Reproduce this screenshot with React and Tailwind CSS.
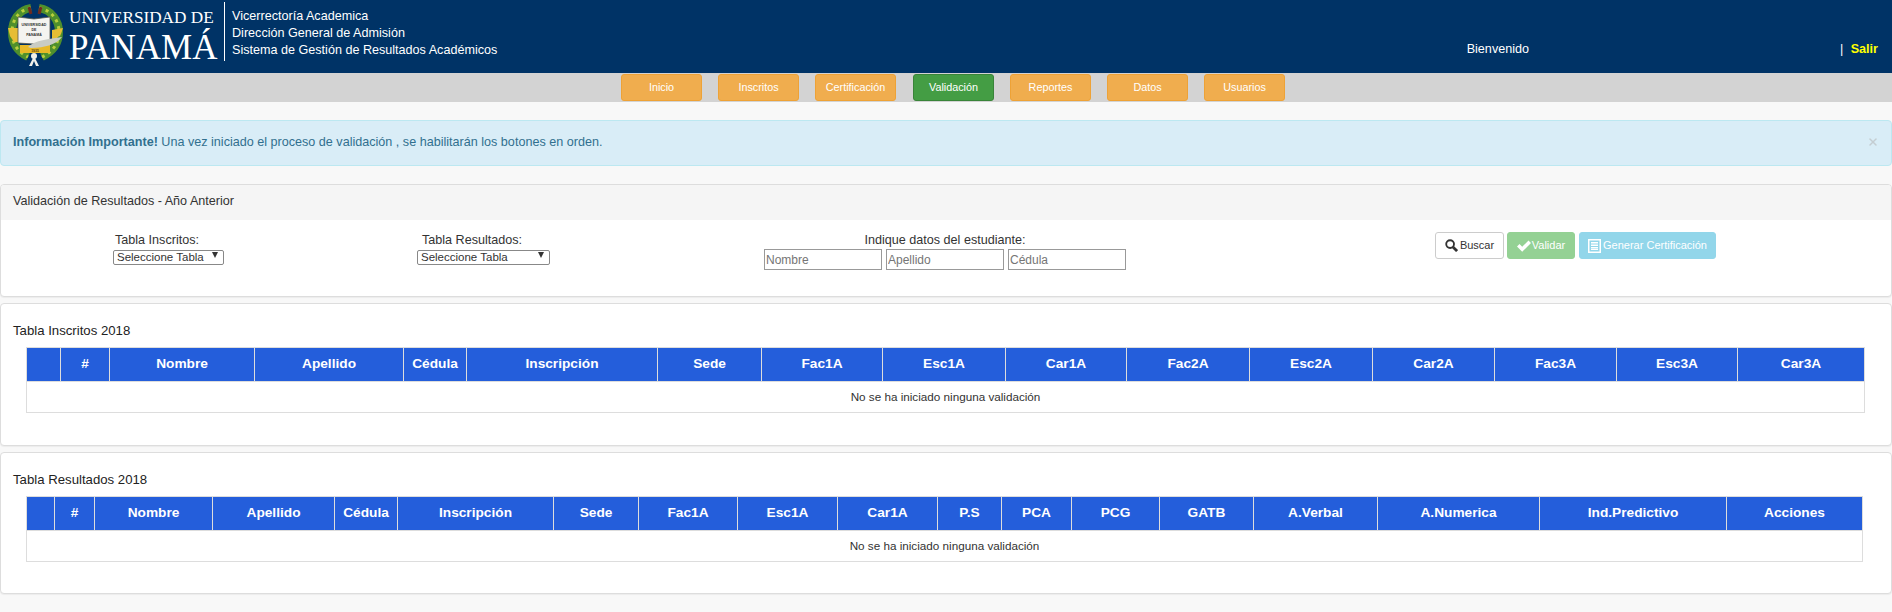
import React from 'react';
import { X } from 'lucide-react';

const navItems = ['Inicio', 'Inscritos', 'Certificación', 'Validación', 'Reportes', 'Datos', 'Usuarios'];

const inscritosCols = [
    { label: '', w: 'w-[34px]' },
    { label: '#', w: 'w-[49px]' },
    { label: 'Nombre', w: 'w-[145px]' },
    { label: 'Apellido', w: 'w-[149px]' },
    { label: 'Cédula', w: 'w-[63px]' },
    { label: 'Inscripción', w: 'w-[191px]' },
    { label: 'Sede', w: 'w-[104px]' },
    { label: 'Fac1A', w: 'w-[121px]' },
    { label: 'Esc1A', w: 'w-[123px]' },
    { label: 'Car1A', w: 'w-[121px]' },
    { label: 'Fac2A', w: 'w-[123px]' },
    { label: 'Esc2A', w: 'w-[123px]' },
    { label: 'Car2A', w: 'w-[122px]' },
    { label: 'Fac3A', w: 'w-[122px]' },
    { label: 'Esc3A', w: 'w-[121px]' },
    { label: 'Car3A', w: 'w-[127px]' },
];

const resultadosCols = [
    { label: '', w: 'w-[28px]' },
    { label: '#', w: 'w-[40px]' },
    { label: 'Nombre', w: 'w-[118px]' },
    { label: 'Apellido', w: 'w-[122px]' },
    { label: 'Cédula', w: 'w-[63px]' },
    { label: 'Inscripción', w: 'w-[156px]' },
    { label: 'Sede', w: 'w-[85px]' },
    { label: 'Fac1A', w: 'w-[99px]' },
    { label: 'Esc1A', w: 'w-[100px]' },
    { label: 'Car1A', w: 'w-[100px]' },
    { label: 'P.S', w: 'w-[64px]' },
    { label: 'PCA', w: 'w-[70px]' },
    { label: 'PCG', w: 'w-[88px]' },
    { label: 'GATB', w: 'w-[94px]' },
    { label: 'A.Verbal', w: 'w-[124px]' },
    { label: 'A.Numerica', w: 'w-[162px]' },
    { label: 'Ind.Predictivo', w: 'w-[187px]' },
    { label: 'Acciones', w: 'w-[136px]' },
];

const Crest = () => (
    <svg viewBox="0 0 64 68" className="w-[64px] h-[68px] shrink-0">
        {/* wreath */}
        <path d="M26 8 C13 10 7 21 7 32 C7 44 13 52 23 57" stroke="#4f8f2c" strokeWidth="8" fill="none" />
        <path d="M34 8 C47 10 54 21 54 32 C54 44 47 52 37 57" stroke="#4f8f2c" strokeWidth="8" fill="none" />
        <path d="M26 8 C13 10 7 21 7 32 C7 44 13 52 23 57" stroke="#b9cf3e" strokeWidth="3" strokeDasharray="3 4" fill="none" />
        <path d="M34 8 C47 10 54 21 54 32 C54 44 47 52 37 57" stroke="#b9cf3e" strokeWidth="3" strokeDasharray="3 4" fill="none" />
        <path d="M24 7 L26 14 M36 7 L34 14" stroke="#6e2a20" strokeWidth="3" />
        {/* gold side pieces */}
        <path d="M3 28 L13 28 L14 42 L9 42 L5 36 Z" fill="#e6bd35" />
        <path d="M58 28 L47 30 L47 40 L52 38 L56 34 Z" fill="#e6bd35" />
        {/* open book */}
        <path d="M13 17 L29 19 L45 17 L45 41 L29 44 L13 43 Z" fill="#f4f4f0" stroke="#55554a" strokeWidth="0.8" />
        <text x="29" y="26" textAnchor="middle" fontSize="3.6" fontWeight="700" fontFamily="Liberation Sans" fill="#333333">UNIVERSIDAD</text>
        <text x="29" y="31" textAnchor="middle" fontSize="3.6" fontWeight="700" fontFamily="Liberation Sans" fill="#333333">DE</text>
        <text x="29" y="36" textAnchor="middle" fontSize="3.6" fontWeight="700" fontFamily="Liberation Sans" fill="#333333">PANAMÁ</text>
        {/* ribbon */}
        <path d="M15 45 L45 45 L45 53 L15 53 Z" fill="#e8b928" />
        <text x="30" y="51.5" textAnchor="middle" fontSize="3.4" fontWeight="700" fontFamily="Liberation Sans" fill="#5a4212">1935</text>
        {/* feather */}
        <path d="M23 47 C30 40 44 39 57 37 C52 44 40 48 26 48 Z" fill="#c9ccc4" />
        {/* bow */}
        <path d="M29 56 L24 66 L27 66 L29 61 L31 66 L34 66 Z" fill="#f0f0ea" />
        <circle cx="29" cy="56" r="3" fill="#f0f0ea" />
    </svg>
);

const DataTable = ({ cols }) => (
    <table className="table-fixed border-collapse w-[1837px] ml-[25px] mt-[8px]">
        <thead>
            <tr className="h-[34px] bg-[#245edb]">
                {cols.map((c, i) => (
                    <th key={i} className={`${c.w} border border-[#dddddd] text-white text-[13.7px] font-bold text-center p-0`}>
                        {c.label}
                    </th>
                ))}
            </tr>
        </thead>
        <tbody>
            <tr className="h-[31px] bg-white">
                <td colSpan={cols.length} className="border border-[#dddddd] text-center text-[11.7px] text-[#333333] p-0">
                    No se ha iniciado ninguna validación
                </td>
            </tr>
        </tbody>
    </table>
);

const Panel = ({ className, children }) => (
    <div className={`bg-white border border-[#dddddd] rounded-[4px] shadow-[0_1px_1px_rgba(0,0,0,0.05)] ${className}`}>
        {children}
    </div>
);

const TableSelect = ({ className }) => (
    <div className={`relative h-[15px] ${className}`}>
        <select className="appearance-none w-full h-full bg-white border border-[#888888] rounded-[2px] text-[11.5px] leading-[13px] pl-[3px]">
            <option>Seleccione Tabla</option>
        </select>
        <svg viewBox="0 0 6 6" className="absolute right-[6px] top-[4px] w-[6px] h-[6px] pointer-events-none">
            <path d="M0 0H6L3 6Z" fill="#333333" />
        </svg>
    </div>
);

const App = () => {
    return (
        <div className="min-h-[612px] bg-[#f8f8f8] font-['Liberation_Sans',Arial,sans-serif] text-[#333333] overflow-hidden">
            {/* Header */}
            <div className="h-[73px] bg-[#003366] flex text-white">
                <div className="pl-[5px]"><Crest /></div>
                <div className="flex flex-col w-[155px] font-['Liberation_Serif',serif] whitespace-nowrap">
                    <span className="text-[17.2px] leading-[20px] mt-[8px]">UNIVERSIDAD DE</span>
                    <span className="text-[35px] leading-[36px] mt-[2px]">PANAMÁ</span>
                </div>
                <div className="w-px h-[59px] bg-white mt-[2px]"></div>
                <div className="ml-[7px] mt-[8px] text-[12.6px] leading-[17px]">
                    <p>Vicerrectoría Academica</p>
                    <p>Dirección General de Admisión</p>
                    <p>Sistema de Gestión de Resultados Académicos</p>
                </div>
                <span className="ml-auto mt-[41px] text-[12.6px] leading-[17px]">Bienvenido</span>
                <div className="ml-[311px] mr-[14px] mt-[41px] text-[12.6px] leading-[17px] w-[38px] flex justify-between">
                    <span>|</span>
                    <span className="font-bold text-[#ffff00]">Salir</span>
                </div>
            </div>

            {/* Nav */}
            <div className="h-[29px] bg-[#d3d3d3] flex justify-center gap-[16px] pt-px pl-[14px]">
                {navItems.map(item => (
                    <button
                        key={item}
                        className={`w-[81px] h-[27px] rounded-[3px] border text-white text-[10.8px] ${
                            item === 'Validación' ? 'ml-px bg-[#449d44] border-[#398439]' : 'bg-[#f0ad4e] border-[#eea236]'
                        }`}
                    >
                        {item}
                    </button>
                ))}
            </div>

            {/* Alert */}
            <div className="mt-[18px] h-[46px] bg-[#d9edf7] border border-[#bce8f1] rounded-[4px] flex items-center justify-between pl-[12px] pr-[12px] pb-[2px] text-[12.6px] text-[#31708f]">
                <p><b>Información Importante!</b> Una vez iniciado el proceso de validación , se habilitarán los botones en orden.</p>
                <X size={12} strokeWidth={3} className="text-[#c4cdd2]" />
            </div>

            {/* Filtros */}
            <Panel className="mt-[18px] h-[113px] overflow-hidden">
                <div className="h-[35px] bg-[#f5f5f5] flex items-center pl-[12px] pb-[2px] text-[12.6px]">
                    Validación de Resultados - Año Anterior
                </div>
                <div className="flex pt-[12px] text-[12.6px]">
                    <div className="w-[336px] pl-[112px] flex flex-col items-start">
                        <label className="ml-[2px] leading-[16px]">Tabla Inscritos:</label>
                        <TableSelect className="w-[111px]" />
                    </div>
                    <div className="w-[292px] pl-[80px] flex flex-col items-start">
                        <label className="ml-[5px] leading-[16px]">Tabla Resultados:</label>
                        <TableSelect className="w-[133px]" />
                    </div>
                    <div className="w-[632px] flex flex-col items-center">
                        <label className="leading-[16px]">Indique datos del estudiante:</label>
                        <div className="flex gap-[4px] mt-px">
                            <input placeholder="Nombre" className="w-[118px] h-[21px] bg-white border border-[#999999] text-[12px] pl-px placeholder:text-[#757575]" />
                            <input placeholder="Apellido" className="w-[118px] h-[21px] bg-white border border-[#999999] text-[12px] pl-px placeholder:text-[#757575]" />
                            <input placeholder="Cédula" className="w-[118px] h-[21px] bg-white border border-[#999999] text-[12px] pl-px placeholder:text-[#757575]" />
                        </div>
                    </div>
                    <div className="flex gap-[3px] ml-[174px] text-[11px] h-[27px]">
                        <button className="w-[69px] rounded-[3px] bg-white border border-[#cccccc] text-[#333333] flex items-center justify-center gap-[2px]">
                            <svg viewBox="0 0 14 14" className="w-[13px] h-[13px]" fill="none" stroke="currentColor">
                                <circle cx="5.5" cy="5.5" r="4.2" strokeWidth="2" />
                                <path d="M8.8 8.8L13 13" strokeWidth="3" />
                            </svg>
                            Buscar
                        </button>
                        <button className="w-[68px] rounded-[3px] bg-[#94d194] border border-[#94d194] text-white flex items-center justify-center gap-px">
                            <svg viewBox="0 0 14 12" className="w-[14px] h-[12px]" fill="currentColor">
                                <path d="M0 6.5L2.5 4L5.2 6.7L11.5 0.5L14 3L5.2 11.8Z" />
                            </svg>
                            Validar
                        </button>
                        <button className="ml-px w-[137px] rounded-[3px] bg-[#92d6ea] border border-[#92d6ea] text-white flex items-center justify-center gap-[2px]">
                            <svg viewBox="0 0 13 14" className="w-[13px] h-[14px]" fill="currentColor">
                                <path fillRule="evenodd" d="M0 0H13V14H0ZM1.5 1.5V12.5H11.5V1.5Z" />
                                <path d="M3 3H10V4.5H3ZM3 5.5H10V7H3ZM3 8H10V9.5H3ZM3 10H10V11H3Z" />
                            </svg>
                            Generar Certificación
                        </button>
                    </div>
                </div>
            </Panel>

            {/* Tabla Inscritos */}
            <Panel className="mt-[6px] h-[143px] overflow-hidden">
                <h5 className="pl-[12px] mt-[19px] text-[13.2px] leading-[16px] text-[#222222]">Tabla Inscritos 2018</h5>
                <DataTable cols={inscritosCols} />
            </Panel>

            {/* Tabla Resultados */}
            <Panel className="mt-[6px] h-[142px] overflow-hidden">
                <h5 className="pl-[12px] mt-[19px] text-[13.2px] leading-[16px] text-[#222222]">Tabla Resultados 2018</h5>
                <DataTable cols={resultadosCols} />
            </Panel>
        </div>
    );
};

export default App;
